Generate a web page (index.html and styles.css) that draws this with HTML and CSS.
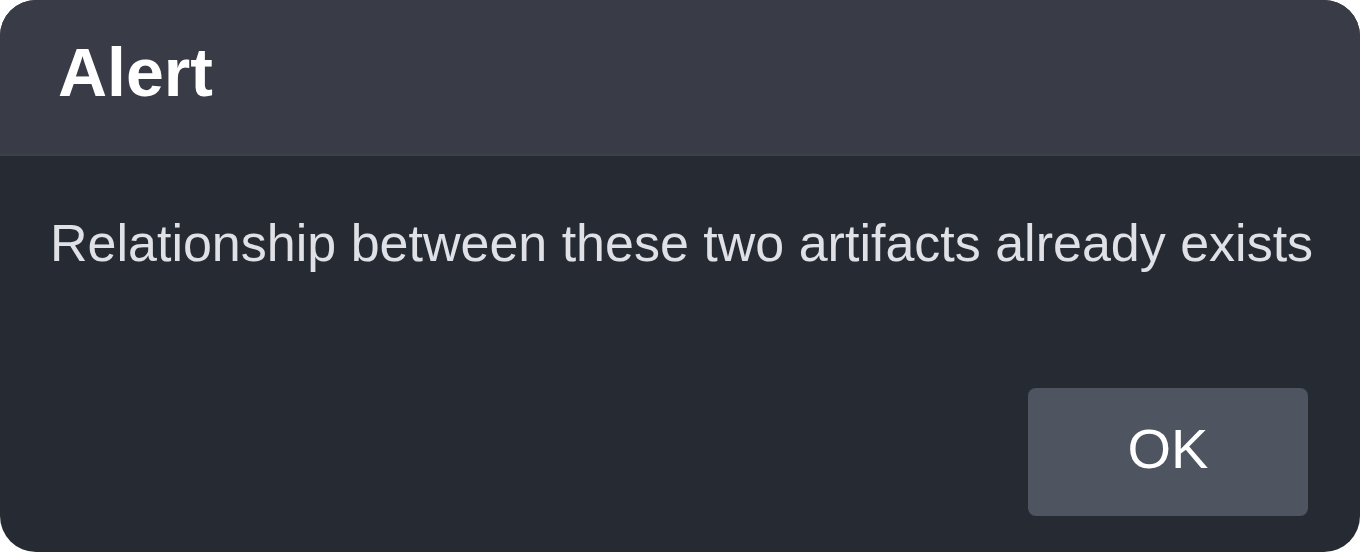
FILE: index.html
```html
<!DOCTYPE html>
<html lang="en">
<head>
    <meta charset="UTF-8">
    <meta name="viewport" content="width=device-width, initial-scale=1.0">
    <title>Alert</title>
    <link rel="stylesheet" href="styles.css">
</head>
<body>
  <div class="dialog">
    <div class="dialog-header">
        <h1>Alert</h1>
    </div>
    <div class="dialog-body">
        <p class="message">Relationship between these two artifacts already exists</p>
        <div class="actions">
            <button class="btn-ok">OK</button>
        </div>
    </div>
  </div>
</body>
</html>
```

FILE: styles.css
```css
body {
    font-family: 'Liberation Sans', Arial, sans-serif;
    background-color: #ffffff;
    margin: 0;
    padding: 0;
}
.dialog {
    width: 1360px;
    height: 552px;
    background-color: #262a33;
    border-radius: 36px;
    overflow: hidden;
    display: flex;
    flex-direction: column;
}
.dialog-header {
    height: 156px;
    box-sizing: border-box;
    background-color: #393c46;
    border-bottom: 2px solid #3e414b;
    display: flex;
    align-items: center;
    padding: 0 0 10px 58px;
}
h1 {
    margin: 0;
    font-size: 68px;
    font-weight: bold;
    color: #ffffff;
}
.dialog-body {
    flex: 1;
    display: flex;
    flex-direction: column;
    padding: 0 52px 36px 50px;
}
.message {
    margin: 0;
    margin-top: 57px;
    font-size: 52px;
    white-space: nowrap;
    color: #dfe1e6;
}
.actions {
    margin-top: auto;
    display: flex;
    justify-content: flex-end;
}
.btn-ok {
    width: 280px;
    height: 128px;
    padding: 0 0 8px;
    background-color: #4f5461;
    border: none;
    border-radius: 8px;
    color: #ffffff;
    font-family: 'Liberation Sans', Arial, sans-serif;
    font-size: 56px;
}
```
